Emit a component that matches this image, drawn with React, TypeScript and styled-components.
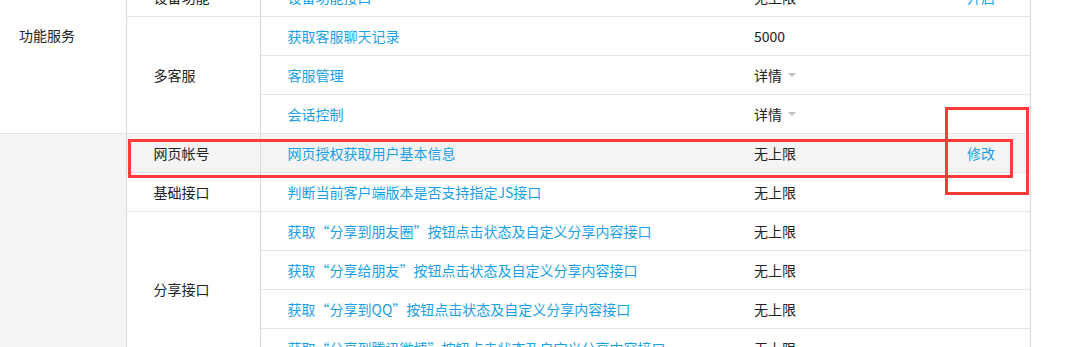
import React from 'react';
import styled, { createGlobalStyle, css } from 'styled-components';

const GlobalStyle = createGlobalStyle`
  html, body {
    margin: 0;
    padding: 0;
    background: #fff;
    overflow: hidden;
  }
  body {
    font-family: "Noto Sans CJK SC", "Microsoft YaHei", sans-serif;
    font-size: 14px;
    color: #222;
  }
`;

const colors = {
  line: '#e4e4e4',
  groupLine: '#d8d8d8',
  hover: '#f4f4f4',
  link: '#189fe6',
  arrow: '#bdbdbd',
  mark: '#ff3a3a',
};

const Page = styled.div`
  position: relative;
  width: 1075px;
  height: 347px;
  overflow: hidden;
`;

const Table = styled.table`
  margin-top: -62px;
  width: 1030px;
  border-collapse: collapse;
  table-layout: fixed;
  border-right: 1px solid ${colors.groupLine};
`;

const Row = styled.tr<{ $hover?: boolean }>`
  height: 39px;
  ${({ $hover }) =>
    $hover &&
    css`
      & > td {
        background: ${colors.hover};
      }
    `}
`;

const cellBase = css`
  padding: 0 0 0 27px;
  border-bottom: 1px solid ${colors.line};
  vertical-align: middle;
  white-space: nowrap;
  line-height: 20px;
`;

const GroupCell = styled.td`
  ${cellBase};
  padding-left: 19px;
  background: ${colors.hover};
  border-right: 1px solid ${colors.groupLine};
`;

const WhiteGroupCell = styled(GroupCell)`
  background: #fff;
`;

const ModuleCell = styled.td`
  ${cellBase};
  border-right: 1px solid ${colors.groupLine};
`;

const ApiCell = styled.td`
  ${cellBase};
  color: ${colors.link};
`;

const QuotaCell = styled.td`
  ${cellBase};
`;

const ActionCell = styled.td`
  ${cellBase};
  color: ${colors.link};
`;

const Detail = styled.span`
  display: inline-flex;
  align-items: center;
  gap: 6px;

  &::after {
    content: '';
    display: block;
    width: 0;
    height: 0;
    border-left: 4px solid transparent;
    border-right: 4px solid transparent;
    border-top: 4px solid ${colors.arrow};
    margin-top: 1px;
  }
`;

const Mark = styled.div<{ $left: number; $top: number; $w: number; $h: number }>`
  position: absolute;
  left: ${({ $left }) => $left}px;
  top: ${({ $top }) => $top}px;
  width: ${({ $w }) => $w}px;
  height: ${({ $h }) => $h}px;
  box-sizing: border-box;
  border: 3px solid ${colors.mark};
  pointer-events: none;
`;

type Api = { name: string; quota: React.ReactNode; action?: string; hover?: boolean };
type Module = { name: string; apis: Api[] };
type Group = { name: string; shaded: boolean; modules: Module[] };

const groups: Group[] = [
  {
    name: '功能服务',
    shaded: false,
    modules: [
      { name: '卡券功能', apis: [{ name: '卡券功能接口', quota: '无上限', action: '开启' }] },
      { name: '设备功能', apis: [{ name: '设备功能接口', quota: '无上限', action: '开启' }] },
      {
        name: '多客服',
        apis: [
          { name: '获取客服聊天记录', quota: '5000' },
          { name: '客服管理', quota: <Detail>详情</Detail> },
          { name: '会话控制', quota: <Detail>详情</Detail> },
        ],
      },
    ],
  },
  {
    name: '网页服务',
    shaded: true,
    modules: [
      {
        name: '网页帐号',
        apis: [{ name: '网页授权获取用户基本信息', quota: '无上限', action: '修改', hover: true }],
      },
      { name: '基础接口', apis: [{ name: '判断当前客户端版本是否支持指定JS接口', quota: '无上限' }] },
      {
        name: '分享接口',
        apis: [
          { name: '获取“分享到朋友圈”按钮点击状态及自定义分享内容接口', quota: '无上限' },
          { name: '获取“分享给朋友”按钮点击状态及自定义分享内容接口', quota: '无上限' },
          { name: '获取“分享到QQ”按钮点击状态及自定义分享内容接口', quota: '无上限' },
          { name: '获取“分享到腾讯微博”按钮点击状态及自定义分享内容接口', quota: '无上限' },
        ],
      },
      {
        name: '图像接口',
        apis: [
          { name: '拍照或从手机相册中选图接口', quota: '无上限' },
          { name: '预览图片接口', quota: '无上限' },
          { name: '上传图片接口', quota: '无上限' },
          { name: '下载图片接口', quota: '无上限' },
          { name: '获取本地图片接口', quota: '无上限' },
        ],
      },
      {
        name: '音频接口',
        apis: [
          { name: '开始录音接口', quota: '无上限' },
          { name: '停止录音接口', quota: '无上限' },
          { name: '播放语音接口', quota: '无上限' },
        ],
      },
    ],
  },
];

function GroupRows({ group }: { group: Group }) {
  const total = group.modules.reduce((n, m) => n + m.apis.length, 0);
  const Head = group.shaded ? GroupCell : WhiteGroupCell;
  const rows: React.ReactNode[] = [];

  group.modules.forEach((mod, mi) => {
    mod.apis.forEach((api, ai) => {
      rows.push(
        <Row key={`${mod.name}-${ai}`} $hover={api.hover}>
          {mi === 0 && ai === 0 && <Head rowSpan={total}>{group.name}</Head>}
          {ai === 0 && <ModuleCell rowSpan={mod.apis.length}>{mod.name}</ModuleCell>}
          <ApiCell>{api.name}</ApiCell>
          <QuotaCell>{api.quota}</QuotaCell>
          <ActionCell>{api.action}</ActionCell>
        </Row>
      );
    });
  });

  return <>{rows}</>;
}

export default function App() {
  return (
    <Page>
      <GlobalStyle />
      <Table>
        <colgroup>
          <col style={{ width: 126 }} />
          <col style={{ width: 134 }} />
          <col style={{ width: 467 }} />
          <col style={{ width: 213 }} />
          <col style={{ width: 90 }} />
        </colgroup>
        <tbody>
          {groups.map((g) => (
            <GroupRows key={g.name} group={g} />
          ))}
        </tbody>
      </Table>
      <Mark $left={128} $top={139} $w={885} $h={39} />
      <Mark $left={945} $top={107} $w={84} $h={88} />
    </Page>
  );
}
